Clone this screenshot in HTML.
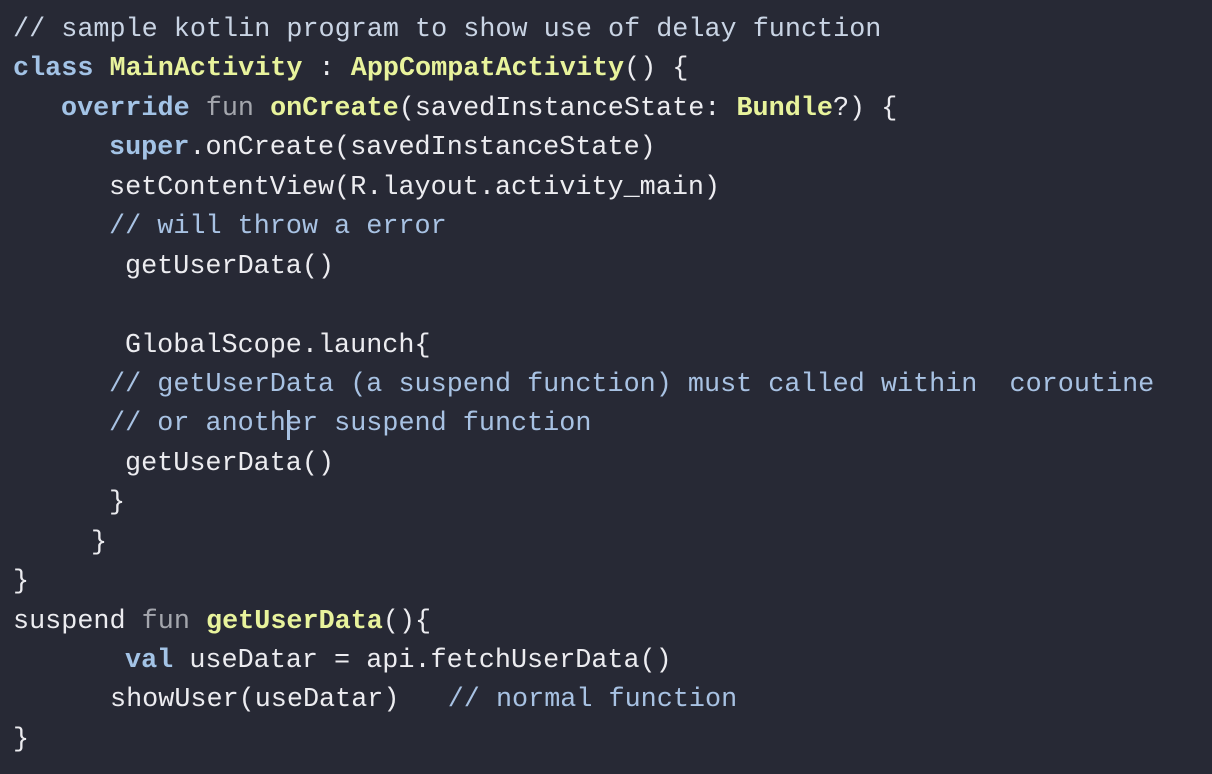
<!DOCTYPE html>
<html><head><meta charset="utf-8"><style>
html,body{margin:0;padding:0;background:#272935;width:1212px;height:774px;overflow:hidden}
.c{position:absolute;left:0;top:11px;font-family:"Liberation Mono",monospace;font-size:26.8px;line-height:39.45px;color:#ececf0}
.l{position:relative;height:39.45px;white-space:pre}
.k{color:#a3c3e6;font-weight:bold}
.f{color:#a4a6ad}
.y{color:#e8f39c;font-weight:bold}
.cm{color:#a8c2e3}
.cm0{color:#c9d4e4}
.cur{position:absolute;left:287px;top:410px;width:3px;height:30px;background:#a8c2e3}
</style></head><body>
<div class="c"><div class="l" style="padding-left:13px"><span class="cm0">// sample kotlin program to show use of delay function</span></div><div class="l" style="padding-left:13px"><span class="k">class</span> <span class="y">MainActivity</span> : <span class="y">AppCompatActivity</span>() {</div><div class="l" style="padding-left:61px"><span class="k">override</span> <span class="f">fun</span> <span class="y">onCreate</span>(savedInstanceState: <span class="y">Bundle</span>?) {</div><div class="l" style="padding-left:109px"><span class="k">super</span>.onCreate(savedInstanceState)</div><div class="l" style="padding-left:109px">setContentView(R.layout.activity_main)</div><div class="l" style="padding-left:109px"><span class="cm">// will throw a error</span></div><div class="l" style="padding-left:125px">getUserData()</div><div class="l"></div><div class="l" style="padding-left:125px">GlobalScope.launch{</div><div class="l" style="padding-left:109px"><span class="cm">// getUserData (a suspend function) must called within  coroutine</span></div><div class="l" style="padding-left:109px"><span class="cm">// or another suspend function</span></div><div class="l" style="padding-left:125px">getUserData()</div><div class="l" style="padding-left:109px">}</div><div class="l" style="padding-left:91px">}</div><div class="l" style="padding-left:13px">}</div><div class="l" style="padding-left:13px">suspend <span class="f">fun</span> <span class="y">getUserData</span>(){</div><div class="l" style="padding-left:125px"><span class="k">val</span> useDatar = api.fetchUserData()</div><div class="l" style="padding-left:110px">showUser(useDatar)   <span class="cm">// normal function</span></div><div class="l" style="padding-left:13px">}</div></div>
<div class="cur"></div>
</body></html>
